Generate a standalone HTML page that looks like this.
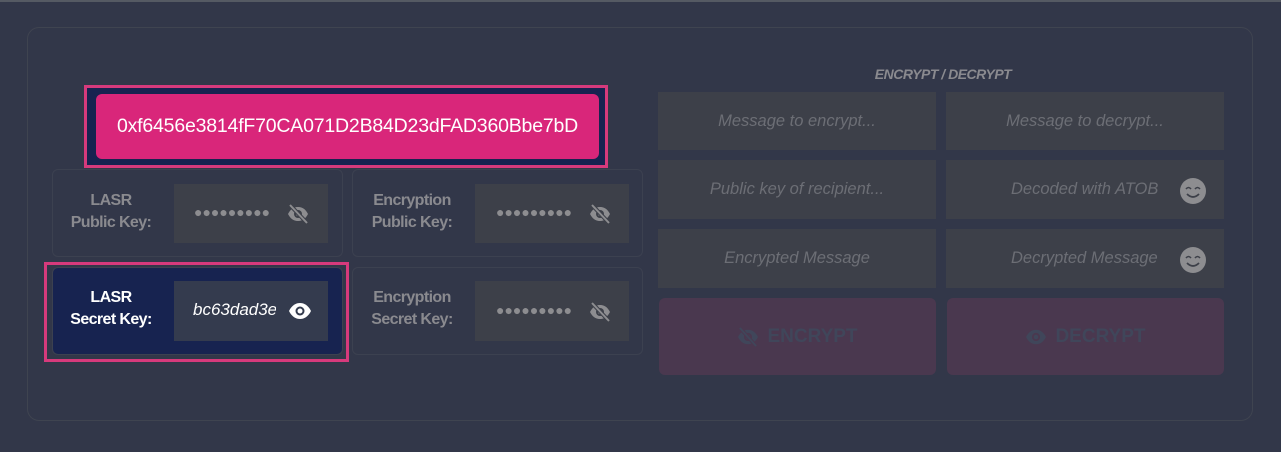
<!DOCTYPE html>
<html><head><meta charset="utf-8"><style>
*{box-sizing:border-box;margin:0;padding:0}
body{width:1281px;height:452px;background:#323749;font-family:"Liberation Sans",sans-serif;position:relative;overflow:hidden}
.a{position:absolute}
.panel{left:27px;top:27px;width:1226px;height:394px;border:1px solid #3f4450;border-radius:12px}
.card{border:1px solid #3c4150;border-radius:6px;background:#323749}
.lbl{font-weight:bold;font-size:16px;color:#8a8a8f;text-align:center;line-height:22px;width:124px;letter-spacing:-0.6px}
.inp{background:#3d4049}
.dots{color:#8d8d90;font-size:14px;letter-spacing:0px;font-weight:bold}
.ph{color:#6c6e75;font-style:italic;font-size:16.5px;text-align:center;line-height:58px}
.btn{background:#4a384f;border-radius:6px;color:#40465a;font-weight:bold;font-size:19px;display:flex;align-items:center;justify-content:center;gap:8px}
</style></head><body>
<div class="a" style="left:0;top:0;width:1281px;height:2px;background:#555a63"></div>
<div class="a panel"></div>
<div class="a" style="left:84px;top:85px;width:524px;height:83px;border:3px solid #d63a7c;background:#172350"></div>
<div class="a" style="left:96px;top:94px;width:503px;height:65px;background:#d9267a;border-radius:6px;color:#fff;font-size:19.5px;line-height:65px;text-align:center;letter-spacing:-0.2px">0xf6456e3814fF70CA071D2B84D23dFAD360Bbe7bD</div>

<div class="a card" style="left:52px;top:169px;width:291px;height:88px"></div>
<div class="a lbl" style="left:49px;top:190px">LASR<br>Public Key:</div>
<div class="a inp" style="left:174px;top:184px;width:154px;height:59px"></div>
<div class="a dots" style="left:194px;top:204px">●●●●●●●●●</div>

<div class="a card" style="left:352px;top:169px;width:291px;height:88px"></div>
<div class="a lbl" style="left:350px;top:190px">Encryption<br>Public Key:</div>
<div class="a inp" style="left:475px;top:184px;width:154px;height:59px"></div>
<div class="a dots" style="left:496px;top:204px">●●●●●●●●●</div>

<div class="a" style="left:44px;top:262px;width:305px;height:100px;border:3px solid #d63a7c"></div>
<div class="a card" style="left:52px;top:267px;width:291px;height:88px;background:#172350"></div>
<div class="a lbl" style="left:49px;top:287px;color:#fff">LASR<br>Secret Key:</div>
<div class="a" style="left:174px;top:281px;width:154px;height:60px;background:#343b4e"></div>
<div class="a" style="left:193px;top:300px;width:83px;overflow:hidden;white-space:nowrap;color:#fff;font-style:italic;font-size:17px">bc63dad3e1</div>

<div class="a card" style="left:352px;top:267px;width:291px;height:88px"></div>
<div class="a lbl" style="left:350px;top:287px">Encryption<br>Secret Key:</div>
<div class="a inp" style="left:475px;top:281px;width:154px;height:60px"></div>
<div class="a dots" style="left:496px;top:302px">●●●●●●●●●</div>

<svg class="a" style="left:286px;top:202px" width="24" height="24" viewBox="0 0 24 24"><path d="M2 12C5 6 9 5 12 5s7 1 10 7c-3 6-7 7-10 7S5 18 2 12z" fill="#8d8d90"/><circle cx="12" cy="12" r="4" fill="#3d4049"/><circle cx="12" cy="12" r="2" fill="#8d8d90"/><path d="M4 3L21 21" stroke="#3d4049" stroke-width="4"/><path d="M4 3L21 21" stroke="#8d8d90" stroke-width="2"/></svg>
<svg class="a" style="left:588px;top:202px" width="24" height="24" viewBox="0 0 24 24"><path d="M2 12C5 6 9 5 12 5s7 1 10 7c-3 6-7 7-10 7S5 18 2 12z" fill="#8d8d90"/><circle cx="12" cy="12" r="4" fill="#3d4049"/><circle cx="12" cy="12" r="2" fill="#8d8d90"/><path d="M4 3L21 21" stroke="#3d4049" stroke-width="4"/><path d="M4 3L21 21" stroke="#8d8d90" stroke-width="2"/></svg>
<svg class="a" style="left:588px;top:300px" width="24" height="24" viewBox="0 0 24 24"><path d="M2 12C5 6 9 5 12 5s7 1 10 7c-3 6-7 7-10 7S5 18 2 12z" fill="#8d8d90"/><circle cx="12" cy="12" r="4" fill="#3d4049"/><circle cx="12" cy="12" r="2" fill="#8d8d90"/><path d="M4 3L21 21" stroke="#3d4049" stroke-width="4"/><path d="M4 3L21 21" stroke="#8d8d90" stroke-width="2"/></svg>
<svg class="a" style="left:288px;top:300px" width="24" height="22" viewBox="0 0 24 22"><path d="M1 11C4 5 8 3 12 3s8 2 11 8c-3 6-7 8-11 8S4 17 1 11z" fill="#fff"/><circle cx="12" cy="11" r="4.5" fill="#343b4e"/><circle cx="12" cy="11" r="2.5" fill="#fff"/></svg>

<div class="a" style="left:658px;top:66px;width:570px;text-align:center;color:#8a8a8f;font-weight:bold;font-style:italic;font-size:14px;letter-spacing:-0.5px">ENCRYPT / DECRYPT</div>
<div class="a inp ph" style="left:658px;top:92px;width:278px;height:58px">Message to encrypt...</div>
<div class="a inp ph" style="left:946px;top:92px;width:278px;height:58px">Message to decrypt...</div>
<div class="a inp ph" style="left:658px;top:160px;width:278px;height:59px">Public key of recipient...</div>
<div class="a inp ph" style="left:946px;top:160px;width:278px;height:59px;text-align:left;padding-left:65px"><span style="display:inline-block;width:150px;overflow:hidden;white-space:nowrap;vertical-align:top">Decoded with ATOB</span></div>
<div class="a inp ph" style="left:658px;top:229px;width:278px;height:59px">Encrypted Message</div>
<div class="a inp ph" style="left:946px;top:229px;width:278px;height:59px;text-align:left;padding-left:65px"><span style="display:inline-block;width:150px;overflow:hidden;white-space:nowrap;vertical-align:top">Decrypted Message</span></div>
<svg class="a" style="left:1179px;top:177px" width="28" height="28" viewBox="0 0 28 28"><circle cx="14" cy="14" r="13" fill="#8d8d90"/><path d="M7 12q2.5-3 5 0M16 12q2.5-3 5 0" stroke="#3d4049" stroke-width="1.6" fill="none"/><path d="M8 17q6 6 12 0" stroke="#3d4049" stroke-width="1.8" fill="none"/></svg>
<svg class="a" style="left:1179px;top:246px" width="28" height="28" viewBox="0 0 28 28"><circle cx="14" cy="14" r="13" fill="#8d8d90"/><path d="M7 12q2.5-3 5 0M16 12q2.5-3 5 0" stroke="#3d4049" stroke-width="1.6" fill="none"/><path d="M8 17q6 6 12 0" stroke="#3d4049" stroke-width="1.8" fill="none"/></svg>

<div class="a btn" style="left:659px;top:298px;width:277px;height:77px"><svg width="22" height="20" viewBox="0 0 24 22"><path d="M1 11C4 5 8 3 12 3s8 2 11 8c-3 6-7 8-11 8S4 17 1 11z" fill="#40465a"/><circle cx="12" cy="11" r="4.5" fill="#4a384f"/><circle cx="12" cy="11" r="2.5" fill="#40465a"/><path d="M3 1L21 21" stroke="#4a384f" stroke-width="4"/><path d="M3 1L21 21" stroke="#40465a" stroke-width="2"/></svg>ENCRYPT</div>
<div class="a btn" style="left:947px;top:298px;width:277px;height:77px"><svg width="22" height="20" viewBox="0 0 24 22"><path d="M1 11C4 5 8 3 12 3s8 2 11 8c-3 6-7 8-11 8S4 17 1 11z" fill="#40465a"/><circle cx="12" cy="11" r="4.5" fill="#4a384f"/><circle cx="12" cy="11" r="2.5" fill="#40465a"/></svg>DECRYPT</div>
</body></html>
